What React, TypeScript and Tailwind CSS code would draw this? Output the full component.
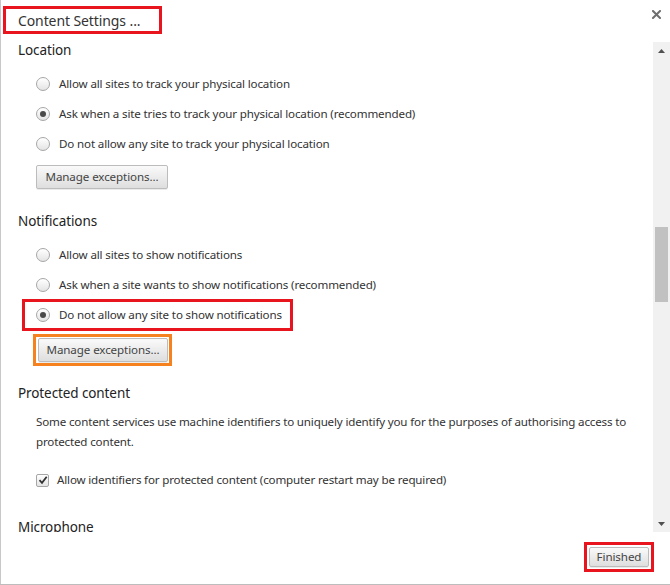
import React from "react";

const font = { fontFamily: '"Noto Sans", "Open Sans", sans-serif' };

function Radio({ checked }: { checked?: boolean }) {
  return (
    <span className="flex h-[14px] w-[14px] shrink-0 items-center justify-center rounded-full border border-[#a6a6a6] bg-gradient-to-b from-[#ffffff] to-[#e4e4e4] shadow-[inset_0_1px_1px_rgba(255,255,255,0.8)]">
      {checked && <span className="h-[6px] w-[6px] rounded-full bg-[#4a4a4a]" />}
    </span>
  );
}

function RadioContent({ label, checked }: { label: string; checked?: boolean }) {
  return (
    <>
      <Radio checked={checked} />
      <span className="whitespace-nowrap text-[11.6px] tracking-[-0.15px] text-[#333]">{label}</span>
    </>
  );
}

function RadioRow({ label, checked }: { label: string; checked?: boolean }) {
  return (
    <div className="flex h-[30px] items-center gap-[9px] pl-[35px]">
      <RadioContent label={label} checked={checked} />
    </div>
  );
}

function Btn({ children, className = "" }: { children: React.ReactNode; className?: string }) {
  return (
    <button
      className={
        "flex items-center justify-center whitespace-nowrap rounded-[2px] border border-[#bcbcbc] bg-gradient-to-b from-[#fafafa] to-[#dedede] text-[11.6px] tracking-[-0.1px] text-[#444] shadow-[0_1px_0_rgba(0,0,0,0.08)] " +
        className
      }
      style={font}
    >
      {children}
    </button>
  );
}

function Heading({ children, className = "" }: { children: React.ReactNode; className?: string }) {
  return (
    <div
      className={
        "h-[16px] whitespace-nowrap pl-[17px] text-[13.5px] leading-[16px] tracking-[-0.1px] text-[#222] " + className
      }
    >
      {children}
    </div>
  );
}

export default function App() {
  return (
    <div className="flex h-[585px] w-[670px] flex-col overflow-hidden bg-white" style={font}>
      <div className="flex h-[584px] flex-col border-l border-[#c8c8c8]">
        {/* Title */}
        <div className="flex h-[42px] items-start justify-between">
          <div className="ml-[2px] mt-[6px] flex h-[28px] w-[159px] items-center whitespace-nowrap border-[3px] border-[#e8151f] pl-[12px] text-[14px] tracking-[-0.1px] text-[#333]">
            Content Settings ...
          </div>
          <button className="mr-[9px] mt-[9px] flex h-[10px] w-[10px] items-center justify-center">
            <svg width="9" height="9" viewBox="0 0 9 9">
              <path d="M1 1 L8 8 M8 1 L1 8" stroke="#6f6f6f" strokeWidth="2" strokeLinecap="square" />
            </svg>
          </button>
        </div>

        {/* Scroll area */}
        <div className="flex h-[490px]">
          <div className="flex-1 overflow-hidden">
            <Heading>Location</Heading>
            <div className="mt-[11px]">
              <RadioRow label="Allow all sites to track your physical location" />
              <RadioRow label="Ask when a site tries to track your physical location (recommended)" checked />
              <RadioRow label="Do not allow any site to track your physical location" />
            </div>
            <div className="ml-[35px] mt-[6px]">
              <Btn className="h-[24px] w-[132px]">Manage exceptions...</Btn>
            </div>

            <Heading className="mt-[24px]">Notifications</Heading>
            <div className="mt-[11px]">
              <RadioRow label="Allow all sites to show notifications" />
              <RadioRow label="Ask when a site wants to show notifications (recommended)" />
              <div className="-my-[1px] ml-[21px] flex h-[32px] w-[271px] items-center gap-[9px] border-[3px] border-[#e8151f] pl-[11px]">
                <RadioContent label="Do not allow any site to show notifications" checked />
              </div>
            </div>
            <div className="ml-[32px] mt-[4px] flex h-[32px] w-[139px] items-center border-[3px] border-[#f5821f] pl-[2px]">
              <Btn className="h-[24px] w-[130px]">Manage exceptions...</Btn>
            </div>

            <Heading className="mt-[19px]">Protected content</Heading>
            <p className="mt-[11px] pl-[35px] text-[11.6px] leading-[20px] tracking-[-0.17px] text-[#333]">
              <span className="whitespace-nowrap">
                Some content services use machine identifiers to uniquely identify you for the purposes of authorising access to
              </span>
              <br />
              protected content.
            </p>
            <div className="mt-[13px] flex h-[30px] items-center gap-[8px] pl-[35px]">
              <span className="flex h-[13px] w-[13px] shrink-0 items-center justify-center rounded-[2px] border border-[#a6a6a6] bg-gradient-to-b from-[#ffffff] to-[#e4e4e4]">
                <svg width="10" height="10" viewBox="0 0 10 10">
                  <path d="M1.5 5.2 L4 7.8 L8.7 1.8" fill="none" stroke="#333" strokeWidth="1.8" />
                </svg>
              </span>
              <span className="whitespace-nowrap text-[11.6px] tracking-[-0.17px] text-[#333]">
                Allow identifiers for protected content (computer restart may be required)
              </span>
            </div>
            <Heading className="mt-[24px]">Microphone</Heading>
          </div>

          {/* Scrollbar */}
          <div className="flex w-[17px] flex-col items-center bg-[#f1f1f1]">
            <div className="flex h-[17px] w-full items-center justify-center">
              <svg width="7" height="4" viewBox="0 0 7 4">
                <path d="M0 4 L3.5 0 L7 4 Z" fill="#505050" />
              </svg>
            </div>
            <div className="mt-[168px] h-[75px] w-[13px] bg-[#c1c1c1]" />
            <div className="flex-1" />
            <div className="flex h-[17px] w-full items-center justify-center">
              <svg width="7" height="4" viewBox="0 0 7 4">
                <path d="M0 0 L7 0 L3.5 4 Z" fill="#505050" />
              </svg>
            </div>
          </div>
        </div>

        {/* Footer */}
        <div className="flex flex-1 items-start justify-end pr-[16px] pt-[10px]">
          <div className="border-[3px] border-[#e8151f] p-[2px]">
            <Btn className="h-[20px] w-[60px]">Finished</Btn>
          </div>
        </div>
      </div>
      <div className="h-[1px] bg-[#bdbdbd]" />
    </div>
  );
}
